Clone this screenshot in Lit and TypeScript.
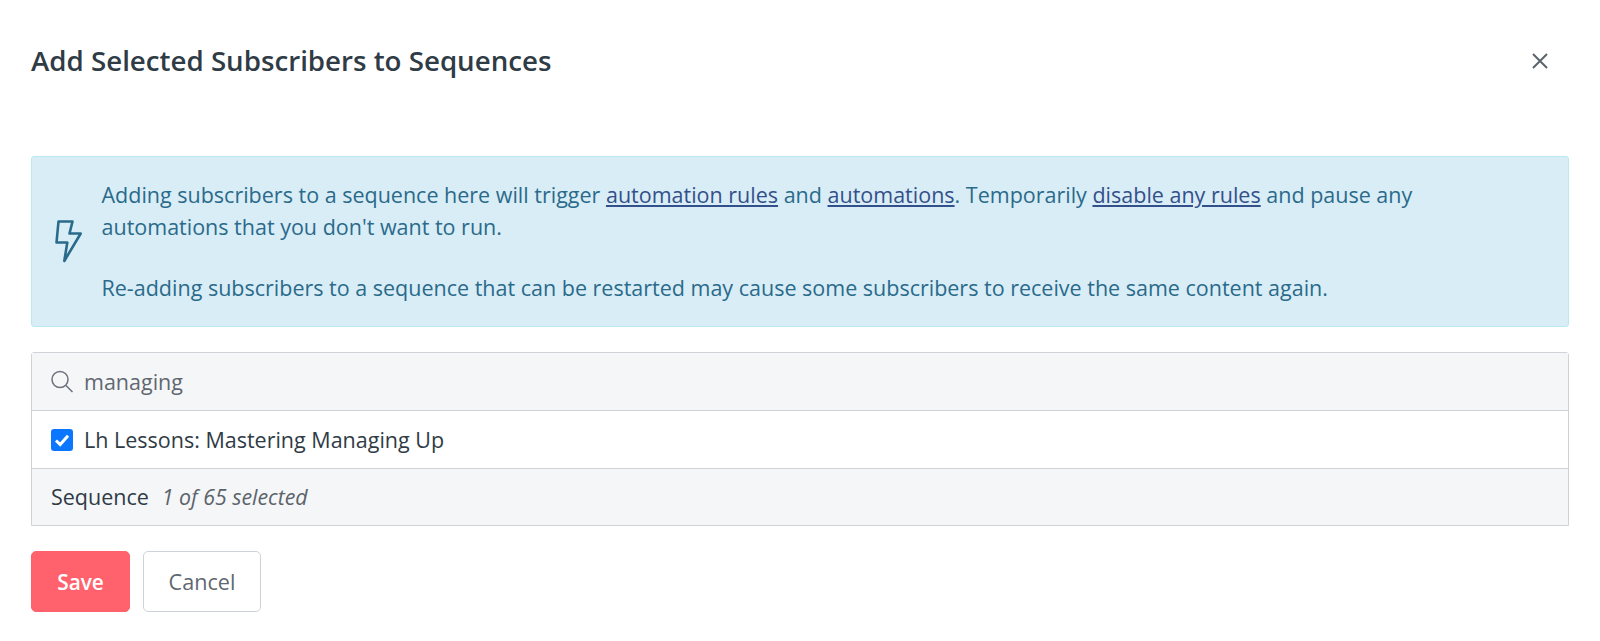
import { LitElement, html, css } from 'lit';
import { customElement } from 'lit/decorators.js';

@customElement('app-root')
export class AppRoot extends LitElement {
  static styles = css`
    :host {
      display: block;
      background: #fff;
      height: 641px;
      font-family: 'Open Sans', sans-serif;
      color: #3b4650;
    }
    .modal {
      padding: 35px 31px 0;
    }
    .head {
      display: flex;
      justify-content: space-between;
      align-items: center;
      height: 50px;
      margin-bottom: 71px;
    }
    h1 {
      margin: 0;
      font-size: 27.7px;
      font-weight: 600;
      color: #2f3b45;
    }
    .close {
      display: block;
      margin: 2px 20px 0 0;
    }
    .alert {
      display: flex;
      align-items: center;
      gap: 18.5px;
      height: 171px;
      box-sizing: border-box;
      padding: 0 20px 0 23px;
      background: #d9edf7;
      border: 1px solid #bce8f1;
      border-radius: 3px;
      color: #2a6a8a;
      font-size: 21.5px;
      line-height: 31.4px;
    }
    .bolt {
      display: block;
      flex: none;
    }
    .alert p {
      margin: 0;
    }
    .alert p + p {
      margin-top: 30px;
    }
    .alert a {
      color: #34508a;
      text-decoration: underline;
    }
    .picker {
      margin-top: 25px;
      border: 1px solid #ced3da;
      border-radius: 3px 3px 0 0;
    }
    .row {
      display: flex;
      align-items: center;
      gap: 11px;
      height: 57px;
      padding: 0 19px;
      font-size: 21.5px;
      box-sizing: border-box;
    }
    .row + .row {
      border-top: 1px solid #ced3da;
      height: 58px;
    }
    .row.foot {
      height: 57px;
      padding-bottom: 2px;
    }
    .grey {
      background: #f5f6f8;
    }
    .search {
      color: #5f6770;
    }
    .box {
      display: block;
      flex: none;
    }
    .name {
      color: #2f3b45;
    }
    .foot {
      gap: 13px;
      color: #2f3b45;
    }
    .foot em {
      color: #5b636b;
      font-size: 21.3px;
    }
    .actions {
      display: flex;
      gap: 13px;
      margin-top: 25px;
    }
    button {
      height: 61px;
      box-sizing: border-box;
      font: 400 21.6px 'Open Sans', sans-serif;
      border-radius: 5px;
      padding: 0;
    }
    .save {
      width: 99px;
      background: #ff626d;
      border: 1px solid #ff626d;
      color: #fff;
      font-size: 20.8px;
      font-weight: 600;
    }
    .cancel {
      width: 118px;
      background: #fff;
      border: 1px solid #ced3da;
      color: #5f6770;
    }
  `;

  render() {
    return html`
      <div class="modal">
        <div class="head">
          <h1>Add Selected Subscribers to Sequences</h1>
          <svg class="close" width="18" height="18" viewBox="0 0 18 18" fill="none" stroke="#5a646d" stroke-width="2">
            <path d="M2 2l14 14M16 2L2 16" />
          </svg>
        </div>
        <div class="alert">
          <svg class="bolt" width="28" height="43" viewBox="0 0 28 43" fill="none" stroke="#2a6a8a" stroke-width="2.6" stroke-linejoin="round" stroke-linecap="round">
            <path d="M3.5 1.5H17.5L14.5 13.5H25.7L9.3 41L12.3 22.5H1.5Z" />
          </svg>
          <div>
            <p>
              Adding subscribers to a sequence here will trigger <a>automation rules</a> and
              <a>automations</a>. Temporarily <a>disable any rules</a> and pause any<br />automations
              that you don't want to run.
            </p>
            <p>
              Re-adding subscribers to a sequence that can be restarted may cause some subscribers to
              receive the same content again.
            </p>
          </div>
        </div>
        <div class="picker">
          <div class="row grey search">
            <svg class="box" width="22" height="23" viewBox="0 0 22 23" fill="none" stroke="#6a727a" stroke-width="1.5">
              <circle cx="9" cy="9.5" r="8" />
              <path d="M15 15.5L21.5 22" />
            </svg>
            <span>managing</span>
          </div>
          <div class="row">
            <svg class="box" width="22" height="22" viewBox="0 0 22 22">
              <rect width="22" height="22" rx="3" fill="#0b76ff" />
              <path d="M5 11.5L9.2 15.5L17 6.8" fill="none" stroke="#fff" stroke-width="3" />
            </svg>
            <span class="name">Lh Lessons: Mastering Managing Up</span>
          </div>
          <div class="row grey foot">
            <span>Sequence</span>
            <em>1 of 65 selected</em>
          </div>
        </div>
        <div class="actions">
          <button class="save">Save</button>
          <button class="cancel">Cancel</button>
        </div>
      </div>
    `;
  }
}
